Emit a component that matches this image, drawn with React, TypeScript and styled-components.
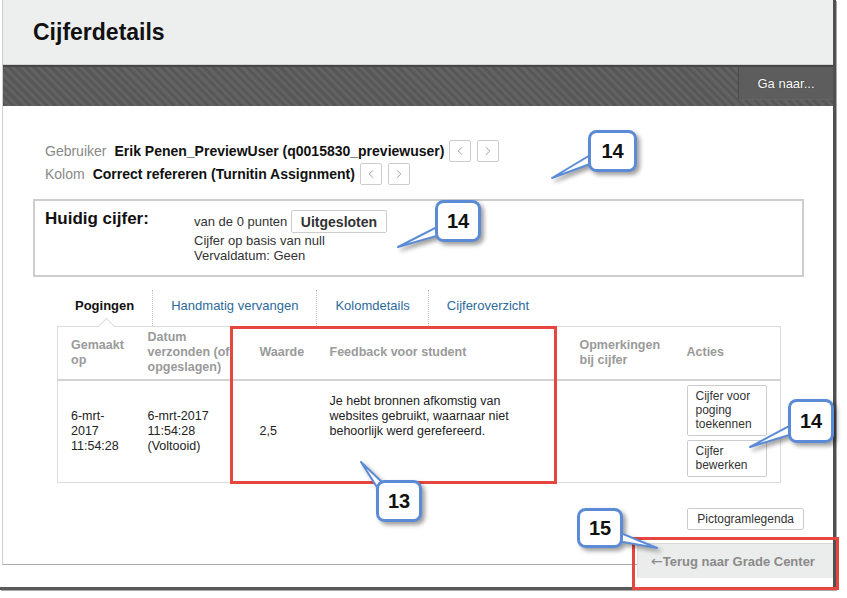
import React from "react";
import styled, { createGlobalStyle } from "styled-components";
import { ChevronLeft, ChevronRight } from "lucide-react";

const GlobalStyle = createGlobalStyle`
  html, body { margin: 0; padding: 0; background: #fff; }
  body { font-family: "Liberation Sans", Arial, sans-serif; color: #222; }
  * { box-sizing: border-box; }
`;

const Screen = styled.div`
  position: relative;
  width: 847px;
  height: 598px;
  overflow: hidden;
  background: #fff;
`;

const Window = styled.div`
  width: 836px;
  height: 590px;
  border-right: 3px solid #505050;
  border-bottom: 3px solid #5a5a5a;
  box-shadow: 1px 1px 0 #a8a8a8;
  display: flex;
  flex-direction: column;
  background: #fff;
`;

const Panel = styled.div`
  height: 543px;
  margin-left: 2px;
  border-left: 1px solid #cfcfcf;
  display: flex;
  flex-direction: column;
`;

const Header = styled.header`
  height: 65px;
  background: #edeeee;
  border-bottom: 1px solid #d2d2d2;
  display: flex;
  align-items: center;
  padding-left: 30px;
`;

const Title = styled.h1`
  margin: 0;
  font-size: 23px;
  font-weight: bold;
  color: #111;
`;

const ActionBar = styled.div`
  height: 41px;
  border-top: 2px solid #464646;
  background: repeating-linear-gradient(45deg, #575757 0 3px, #626262 3px 6px);
  display: flex;
  justify-content: flex-end;
`;

const GoTo = styled.button`
  width: 95px;
  height: 33px;
  border: none;
  border-left: 1px solid #4c4c4c;
  border-bottom: 1px dotted #6a6a6a;
  background: #5d5d5d;
  color: #fff;
  font-family: inherit;
  font-size: 13px;
  text-shadow: 0 0 1px #222;
  padding: 0;
`;

const Body = styled.div`
  padding: 34px 29px 0 30px;
  display: flex;
  flex-direction: column;
`;

const Info = styled.div`
  padding-left: 12px;
  display: flex;
  flex-direction: column;
  gap: 1px;
`;

const InfoRow = styled.div`
  height: 22px;
  display: flex;
  align-items: center;
  font-size: 14px;
`;

const InfoLabel = styled.span`
  color: #888;
  margin-right: 8px;
`;

const InfoValue = styled.span`
  font-weight: bold;
  color: #111;
  margin-right: 5px;
`;

const NavBtn = styled.button`
  width: 22px;
  height: 22px;
  margin-right: 6px;
  padding: 0;
  border: 1px solid #ccc;
  border-radius: 2px;
  background: #fff;
  color: #808080;
  display: flex;
  align-items: center;
  justify-content: center;
`;

const GradeBox = styled.section`
  margin-top: 14px;
  height: 78px;
  border: 2px solid #cdcdcd;
  padding: 8px 10px 0;
  display: flex;
`;

const GradeLabel = styled.div`
  width: 149px;
  font-size: 17px;
  line-height: 20px;
  font-weight: bold;
  color: #111;
`;

const GradeDetails = styled.div`
  margin-top: 1px;
  font-size: 13px;
  line-height: 15px;
  color: #333;
`;

const GradeLine = styled.div`
  display: flex;
  align-items: center;
`;

const PlainButton = styled.button<{ $bold?: boolean }>`
  font-family: inherit;
  font-size: ${(p) => (p.$bold ? "14px" : "12px")};
  font-weight: ${(p) => (p.$bold ? "bold" : "normal")};
  color: #333;
  background: #fff;
  border: 1px solid #ccc;
  border-radius: 2px;
  height: ${(p) => (p.$bold ? "23px" : "22px")};
  padding: 0 9px;
`;

const TabBar = styled.nav`
  margin: 13px 23px 0 24px;
  height: 36px;
  display: flex;
`;

const Tab = styled.div<{ $active?: boolean }>`
  position: relative;
  padding: 6px 18px 0;
  font-size: 13px;
  line-height: 20px;
  color: ${(p) => (p.$active ? "#111" : "#2c6a9c")};
  font-weight: ${(p) => (p.$active ? "bold" : "normal")};
  & + & { border-left: 1px dotted #c4c4c4; }
  ${(p) =>
    p.$active &&
    `&::after {
      content: "";
      position: absolute;
      z-index: 2;
      left: 44px;
      bottom: -5px;
      width: 10px;
      height: 10px;
      background: #fff;
      border-left: 1px solid #dcdcdc;
      border-top: 1px solid #dcdcdc;
      transform: rotate(45deg);
    }`}
`;

const Table = styled.table`
  margin: 0 23px 0 24px;
  width: 723px;
  border-collapse: collapse;
  table-layout: fixed;
  border: 1px solid #dcdcdc;
`;

const Col = styled.col<{ $w: number }>`
  width: ${(p) => p.$w}px;
`;

const HeadRow = styled.tr`
  border-bottom: 2px solid #d3d3d3;
`;

const Th = styled.th`
  height: 53px;
  padding: 0 13px;
  text-align: left;
  vertical-align: middle;
  font-size: 12.5px;
  line-height: 15px;
  font-weight: bold;
  color: #9a9a9a;
`;

const Td = styled.td<{ $top?: boolean }>`
  height: 103px;
  padding: ${(p) => (p.$top ? "13px 30px 0 13px" : "0 13px")};
  vertical-align: ${(p) => (p.$top ? "top" : "middle")};
  font-size: 12.5px;
  line-height: 15px;
  color: #222;
`;

const ActionStack = styled.div`
  display: flex;
  flex-direction: column;
  gap: 4px;
`;

const ActionButton = styled.button`
  width: 100%;
  padding: 3px 8px 4px;
  text-align: left;
  font-family: inherit;
  font-size: 12px;
  line-height: 14px;
  color: #333;
  background: #fff;
  border: 1px solid #ccc;
  border-radius: 2px;
`;

const LegendRow = styled.div`
  margin-top: 25px;
  display: flex;
  justify-content: flex-end;
`;

const Footer = styled.div`
  height: 35px;
  display: flex;
  align-items: flex-start;
`;

const FooterRule = styled.div`
  flex: 1;
  height: 22px;
  margin-left: 2px;
  border-left: 1px solid #cfcfcf;
  border-bottom: 1px solid #aaa;
`;

const BackButton = styled.button`
  width: 196px;
  height: 35px;
  padding: 0 0 0 13px;
  display: flex;
  align-items: center;
  border: none;
  border-top: 1px solid #dadada;
  border-left: 1px solid #e2e2e2;
  background: #ebecec;
  font-family: inherit;
  font-size: 13px;
  font-weight: bold;
  color: #8a8a8a;
`;

const Arrow = styled.span`
  font-family: "DejaVu Sans", sans-serif;
  font-weight: normal;
  font-size: 14px;
  color: #8a8a8a;
`;

const Highlight = styled.div`
  position: absolute;
  border: 3px solid #e5463f;
  pointer-events: none;
`;

const CalloutSvg = styled.svg`
  position: absolute;
  overflow: visible;
  filter: drop-shadow(3px 3px 2px rgba(0, 0, 0, 0.38));
  pointer-events: none;
`;

const CalloutLabel = styled.div`
  position: absolute;
  display: flex;
  align-items: center;
  justify-content: center;
  font-size: 20px;
  font-weight: bold;
  color: #111;
`;

type CalloutProps = {
  label: string;
  x: number; y: number; w: number; h: number;
  tx: number; ty: number; bx: number; by: number;
};

function Callout({ label, x, y, w, h, tx, ty, bx, by }: CalloutProps) {
  const pad = 8;
  const minX = Math.min(x, tx) - pad;
  const minY = Math.min(y, ty) - pad;
  const width = Math.max(x + w, tx) + pad - minX;
  const height = Math.max(y + h, ty) + pad - minY;
  const dx = bx - tx;
  const dy = by - ty;
  const len = Math.hypot(dx, dy);
  const px = (-dy / len) * 5;
  const py = (dx / len) * 5;
  const pts = `${tx},${ty} ${bx + px},${by + py} ${bx - px},${by - py}`;
  return (
    <>
      <CalloutSvg
        style={{ left: minX, top: minY }}
        width={width}
        height={height}
        viewBox={`${minX} ${minY} ${width} ${height}`}
      >
        <polygon points={pts} fill="#fff" stroke="#5b8bd6" strokeWidth={2} strokeLinejoin="round" />
        <rect x={x + 1.5} y={y + 1.5} width={w - 3} height={h - 3} rx={7} fill="#fff" stroke="#5b8bd6" strokeWidth={3} />
      </CalloutSvg>
      <CalloutLabel style={{ left: x, top: y, width: w, height: h }}>{label}</CalloutLabel>
    </>
  );
}

const callouts: CalloutProps[] = [
  { label: "14", x: 588, y: 130, w: 49, h: 42, tx: 552, ty: 178, bx: 600, by: 155 },
  { label: "14", x: 435, y: 200, w: 46, h: 42, tx: 398, ty: 247, bx: 446, by: 228 },
  { label: "14", x: 788, y: 399, w: 46, h: 44, tx: 750, ty: 447, bx: 798, by: 427 },
  { label: "13", x: 376, y: 480, w: 46, h: 42, tx: 361, ty: 462, bx: 388, by: 495 },
  { label: "15", x: 577, y: 508, w: 46, h: 40, tx: 657, ty: 548, bx: 612, by: 535 },
];

const colWidths = [77, 112, 70, 250, 107, 107];

export default function App() {
  return (
    <Screen>
      <GlobalStyle />
      <Window>
        <Panel>
          <Header>
            <Title>Cijferdetails</Title>
          </Header>
          <ActionBar>
            <GoTo>Ga naar...</GoTo>
          </ActionBar>
          <Body>
            <Info>
              <InfoRow>
                <InfoLabel>Gebruiker</InfoLabel>
                <InfoValue>Erik Penen_PreviewUser (q0015830_previewuser)</InfoValue>
                <NavBtn><ChevronLeft size={14} strokeWidth={1.3} /></NavBtn>
                <NavBtn><ChevronRight size={14} strokeWidth={1.3} /></NavBtn>
              </InfoRow>
              <InfoRow>
                <InfoLabel>Kolom</InfoLabel>
                <InfoValue>Correct refereren (Turnitin Assignment)</InfoValue>
                <NavBtn><ChevronLeft size={14} strokeWidth={1.3} /></NavBtn>
                <NavBtn><ChevronRight size={14} strokeWidth={1.3} /></NavBtn>
              </InfoRow>
            </Info>

            <GradeBox>
              <GradeLabel>Huidig cijfer:</GradeLabel>
              <GradeDetails>
                <GradeLine>
                  van de 0 punten&nbsp;
                  <PlainButton $bold>Uitgesloten</PlainButton>
                </GradeLine>
                <div>Cijfer op basis van null</div>
                <div>Vervaldatum: Geen</div>
              </GradeDetails>
            </GradeBox>

            <TabBar>
              <Tab $active>Pogingen</Tab>
              <Tab>Handmatig vervangen</Tab>
              <Tab>Kolomdetails</Tab>
              <Tab>Cijferoverzicht</Tab>
            </TabBar>

            <Table>
              <colgroup>
                {colWidths.map((w, i) => (
                  <Col key={i} $w={w} />
                ))}
              </colgroup>
              <thead>
                <HeadRow>
                  <Th>Gemaakt op</Th>
                  <Th>Datum verzonden (of opgeslagen)</Th>
                  <Th>Waarde</Th>
                  <Th>Feedback voor student</Th>
                  <Th>Opmerkingen bij cijfer</Th>
                  <Th>Acties</Th>
                </HeadRow>
              </thead>
              <tbody>
                <tr>
                  <Td>6-mrt-2017 11:54:28</Td>
                  <Td>6-mrt-2017<br />11:54:28<br />(Voltooid)</Td>
                  <Td>2,5</Td>
                  <Td $top>
                    Je hebt bronnen afkomstig van websites gebruikt, waarnaar niet behoorlijk werd gerefereerd.
                  </Td>
                  <Td></Td>
                  <Td>
                    <ActionStack>
                      <ActionButton>Cijfer voor poging toekennen</ActionButton>
                      <ActionButton>Cijfer bewerken</ActionButton>
                    </ActionStack>
                  </Td>
                </tr>
              </tbody>
            </Table>

            <LegendRow>
              <PlainButton>Pictogramlegenda</PlainButton>
            </LegendRow>
          </Body>
        </Panel>
        <Footer>
          <FooterRule />
          <BackButton><Arrow>←</Arrow>Terug naar Grade Center</BackButton>
        </Footer>
      </Window>

      <Highlight style={{ left: 230, top: 326, width: 327, height: 158 }} />
      <Highlight style={{ left: 632, top: 537, width: 207, height: 53 }} />
      {callouts.map((c, i) => (
        <Callout key={i} {...c} />
      ))}
    </Screen>
  );
}
